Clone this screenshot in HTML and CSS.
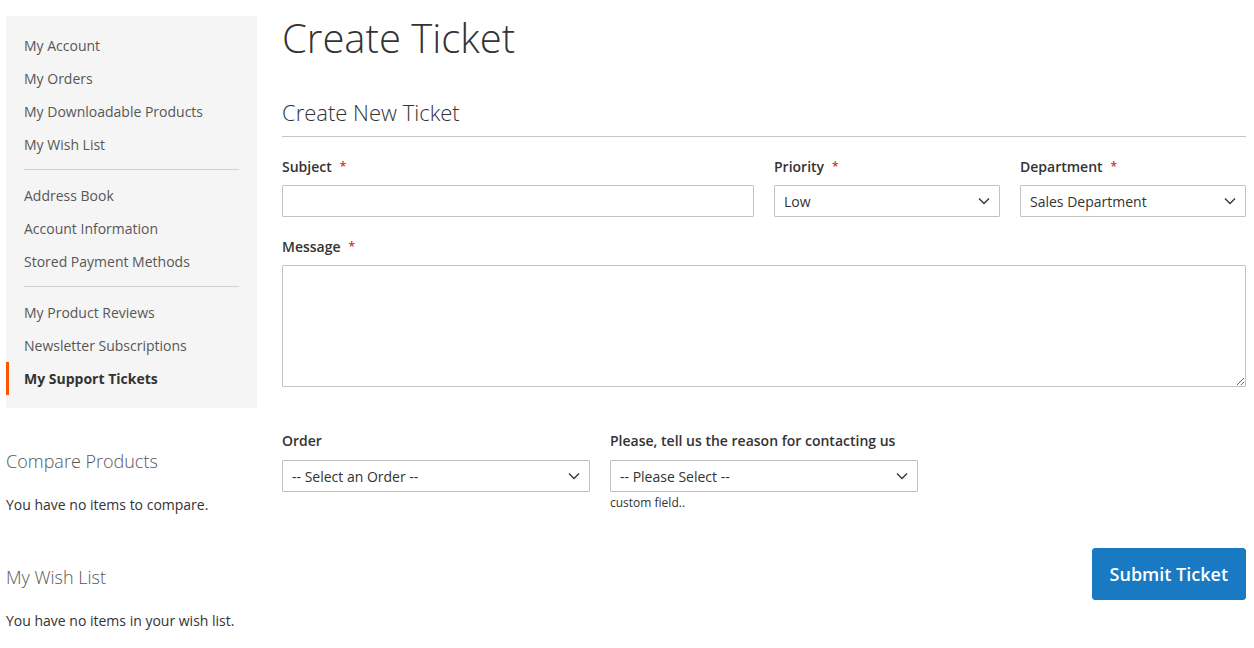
FILE: index.html
```html
<!DOCTYPE html>
<html lang="en">
<head>
    <meta charset="UTF-8">
    <meta name="viewport" content="width=device-width, initial-scale=1.0">
    <title>Create Ticket</title>
    <link rel="stylesheet" href="styles.css">
</head>
<body>
    <div class="page">
        <div class="sidebar">
            <div class="account-nav">
                <ul class="nav-items">
                    <li class="nav-item"><a href="#">My Account</a></li>
                    <li class="nav-item"><a href="#">My Orders</a></li>
                    <li class="nav-item"><a href="#">My Downloadable Products</a></li>
                    <li class="nav-item"><a href="#">My Wish List</a></li>
                    <li class="delimiter"></li>
                    <li class="nav-item"><a href="#">Address Book</a></li>
                    <li class="nav-item"><a href="#">Account Information</a></li>
                    <li class="nav-item"><a href="#">Stored Payment Methods</a></li>
                    <li class="delimiter"></li>
                    <li class="nav-item"><a href="#">My Product Reviews</a></li>
                    <li class="nav-item"><a href="#">Newsletter Subscriptions</a></li>
                    <li class="nav-item current"><strong>My Support Tickets</strong></li>
                </ul>
            </div>

            <div class="block compare">
                <div class="block-title">Compare Products</div>
                <div class="empty">You have no items to compare.</div>
            </div>

            <div class="block wishlist">
                <div class="block-title">My Wish List</div>
                <div class="empty">You have no items in your wish list.</div>
            </div>
        </div>

        <div class="main">
            <h1 class="page-title">Create Ticket</h1>

            <form class="ticket-form" onsubmit="return false">
                <div class="legend">Create New Ticket</div>

                <div class="row row-top">
                    <div class="field">
                        <label class="label required" for="subject">Subject</label>
                        <input type="text" id="subject" class="input-text">
                    </div>
                    <div class="field">
                        <label class="label required" for="priority">Priority</label>
                        <select id="priority" class="select">
                            <option>Low</option>
                            <option>Medium</option>
                            <option>High</option>
                        </select>
                    </div>
                    <div class="field">
                        <label class="label required" for="department">Department</label>
                        <select id="department" class="select">
                            <option>Sales Department</option>
                            <option>Support Department</option>
                        </select>
                    </div>
                </div>

                <div class="field field-message">
                    <label class="label required" for="message">Message</label>
                    <textarea id="message" class="textarea"></textarea>
                </div>

                <div class="row row-bottom">
                    <div class="field">
                        <label class="label" for="order">Order</label>
                        <select id="order" class="select">
                            <option>-- Select an Order --</option>
                        </select>
                    </div>
                    <div class="field">
                        <label class="label" for="reason">Please, tell us the reason for contacting us</label>
                        <select id="reason" class="select">
                            <option>-- Please Select --</option>
                        </select>
                        <div class="note">custom field..</div>
                    </div>
                </div>

                <div class="actions">
                    <button type="submit" class="submit">Submit Ticket</button>
                </div>
            </form>
        </div>
    </div>
</body>
</html>
```

FILE: styles.css
```css
body {
    margin: 0;
    padding: 16px 8px 0 6px;
    background: #fff;
    color: #333;
    font-family: "Open Sans", Arial, sans-serif;
    font-size: 14px;
}

.page {
    display: flex;
    gap: 25px;
}

.sidebar {
    width: 251px;
    flex-shrink: 0;
}

.account-nav {
    background: #f5f5f5;
}

.nav-items {
    list-style: none;
    margin: 0;
    padding: 13px 0 13px;
}

.nav-item {
    padding: 5px 18px;
    line-height: 23px;
}

.nav-item a {
    color: #575757;
    text-decoration: none;
}

.nav-item.current {
    border-left: 3px solid #ff5501;
    padding-left: 15px;
}

.nav-item.current strong {
    color: #333;
    font-weight: 700;
}

.delimiter {
    border-top: 1px solid #d1d1d1;
    margin: 8px 18px 9px;
}

.block {
    margin-top: 41px;
}

.block.wishlist {
    margin-top: 50px;
}

.block-title {
    font-size: 18px;
    font-weight: 300;
    color: #575757;
    line-height: 24px;
    margin-bottom: 22px;
}

.empty {
    line-height: 20px;
}

.main {
    flex: 1;
    min-width: 0;
}

.page-title {
    margin: 0;
    font-size: 40px;
    font-weight: 300;
    line-height: 44px;
    color: #333;
}

.legend {
    margin-top: 37px;
    font-size: 22px;
    font-weight: 300;
    line-height: 30px;
    padding-bottom: 9px;
    border-bottom: 1px solid #c6c6c6;
    margin-bottom: 20px;
}

.row {
    display: grid;
    gap: 20px;
}

.row-top {
    grid-template-columns: 472px 1fr 1fr;
}

.row-bottom {
    grid-template-columns: 308px 308px;
    margin-top: 44px;
}

.field-message {
    margin-top: 20px;
}

.label {
    display: block;
    font-weight: 600;
    line-height: 20px;
    margin-bottom: 8px;
}

.label.required::after {
    content: "*";
    color: #e02b27;
    margin-left: 8px;
    font-size: 12px;
    vertical-align: top;
}

.row-bottom .label {
    margin-bottom: 9px;
}

.input-text,
.select,
.textarea {
    display: block;
    width: 100%;
    box-sizing: border-box;
    border: 1px solid #c2c2c2;
    background: #fff;
    font-family: inherit;
    font-size: 14px;
    color: #333;
    border-radius: 1px;
}

.input-text,
.select {
    height: 32px;
    padding: 0 9px;
}

.select {
    appearance: none;
    padding-right: 30px;
    background-image: url("data:image/svg+xml,%3Csvg xmlns='http://www.w3.org/2000/svg' width='12' height='8' viewBox='0 0 12 8'%3E%3Cpath d='M1 1.5l5 5 5-5' fill='none' stroke='%23333' stroke-width='1.3'/%3E%3C/svg%3E");
    background-repeat: no-repeat;
    background-position: right 9px center;
}

.textarea {
    height: 122px;
    padding: 8px 9px;
    resize: vertical;
}

.note {
    font-size: 12px;
    line-height: 16px;
    margin-top: 3px;
    color: #333;
}

.actions {
    display: flex;
    justify-content: flex-end;
    margin-top: 37px;
}

.submit {
    background: #1979c3;
    border: 1px solid #1979c3;
    color: #fff;
    font-family: inherit;
    font-size: 18px;
    font-weight: 600;
    padding: 0 17px;
    height: 52px;
    border-radius: 3px;
    cursor: pointer;
}

.submit:hover {
    background: #006bb4;
}
```
